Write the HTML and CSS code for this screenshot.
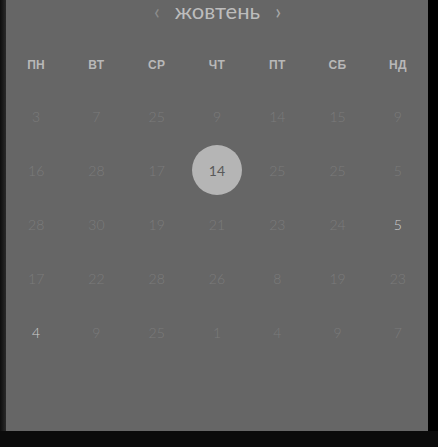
FILE: index.html
```html
<!DOCTYPE html>
<html lang="uk">
<head>
<meta charset="utf-8">
<link rel="stylesheet" href="styles.css">
</head>
<body>
<div class="screen">
  <div class="panel">
    <div class="month">
      <span class="chev prev">&#8249;</span>
      <span class="title">жовтень</span>
      <span class="chev">&#8250;</span>
    </div>
    <div class="weekdays">
      <div>ПН</div><div>ВТ</div><div>СР</div><div>ЧТ</div><div>ПТ</div><div>СБ</div><div>НД</div>
    </div>
    <div class="days">
      <div class="day">3</div><div class="day">7</div><div class="day">25</div><div class="day">9</div><div class="day">14</div><div class="day">15</div><div class="day">9</div>
      <div class="day">16</div><div class="day">28</div><div class="day">17</div><div class="day"><span class="sel">14</span></div><div class="day">25</div><div class="day">25</div><div class="day">5</div>
      <div class="day">28</div><div class="day">30</div><div class="day">19</div><div class="day">21</div><div class="day">23</div><div class="day">24</div><div class="day hl">5</div>
      <div class="day">17</div><div class="day">22</div><div class="day">28</div><div class="day">26</div><div class="day">8</div><div class="day">19</div><div class="day">23</div>
      <div class="day hl">4</div><div class="day">9</div><div class="day">25</div><div class="day">1</div><div class="day">4</div><div class="day">9</div><div class="day">7</div>
    </div>
  </div>
</div>
</body>
</html>
```
FILE: styles.css
```css
html, body {
  margin: 0;
  padding: 0;
  width: 438px;
  height: 447px;
  overflow: hidden;
  background: #0b0b0b;
}
.screen {
  width: 438px;
  height: 431px;
  background: linear-gradient(to right, #0e0e0e 0px, #2a2a2a 6px, #000 6px);
  display: flex;
}
.panel {
  margin-left: 6px;
  width: 422px;
  height: 431px;
  background: #666;
  font-family: "Lato", "Open Sans", sans-serif;
  display: flex;
  flex-direction: column;
}
.month {
  height: 22px;
  display: flex;
  justify-content: center;
  align-items: center;
  gap: 15px;
  margin-left: 1px;
}
.title {
  color: #bdbdbd;
  font-size: 22px;
  font-weight: 400;
  line-height: 22px;
}
.chev {
  color: #a8a8a8;
  font-size: 21px;
  line-height: 22px;
}
.chev.prev { color: #8c8c8c; }
.weekdays {
  margin-top: 33px;
  height: 20px;
  display: grid;
  grid-template-columns: repeat(7, 1fr);
  align-items: center;
  text-align: center;
  color: #b8b8b8;
  font-family: "Liberation Sans", Arial, sans-serif;
  font-weight: bold;
  font-size: 12px;
  letter-spacing: 0.3px;
}
.days {
  margin-top: 14px;
  display: grid;
  grid-template-columns: repeat(7, 1fr);
  grid-auto-rows: 54px;
}
.day {
  display: flex;
  align-items: center;
  justify-content: center;
  color: #7b7b7b;
  font-size: 14px;
  font-weight: 300;
}
.day.hl { color: #d0d0d0; }
.sel {
  width: 50px;
  height: 50px;
  border-radius: 50%;
  background: #b5b5b5;
  color: #5a5a5a;
  font-weight: 400;
  display: flex;
  align-items: center;
  justify-content: center;
}
```
